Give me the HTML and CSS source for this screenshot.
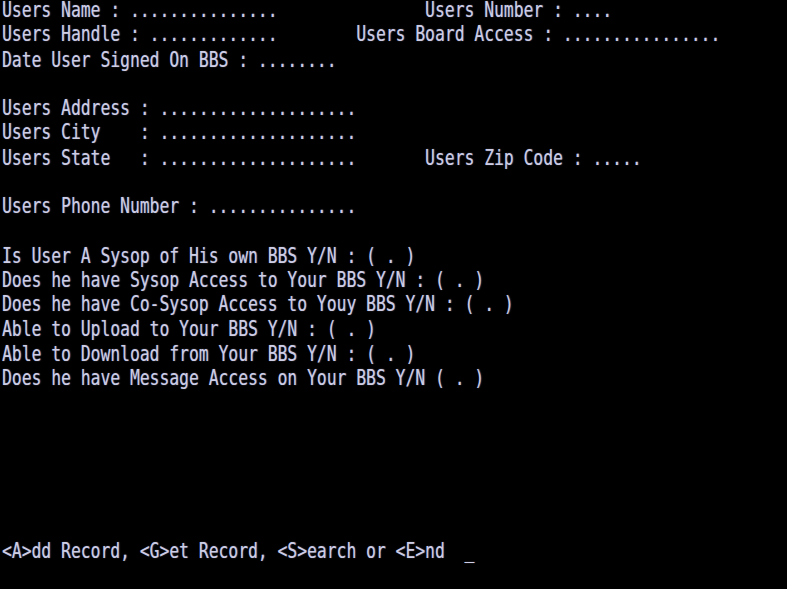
FILE: index.html
```html
<!DOCTYPE html>
<html lang="en">
<head>
<meta charset="utf-8">
<title>User Record</title>
<link rel="stylesheet" href="styles.css">
</head>
<body>
<main class="screen">
<pre class="block">Users Name : ...............               Users Number : ....
Users Handle : .............        Users Board Access : ................
Date User Signed On BBS : ........

Users Address : ....................
Users City    : ....................
Users State   : ....................       Users Zip Code : .....

Users Phone Number : ...............

Is User A Sysop of His own BBS Y/N : ( . )
Does he have Sysop Access to Your BBS Y/N : ( . )
Does he have Co-Sysop Access to Youy BBS Y/N : ( . )
Able to Upload to Your BBS Y/N : ( . )
Able to Download from Your BBS Y/N : ( . )
Does he have Message Access on Your BBS Y/N ( . )






&lt;A&gt;dd Record, &lt;G&gt;et Record, &lt;S&gt;earch or &lt;E&gt;nd  _</pre>
</main>
</body>
</html>
```
FILE: styles.css
```css
html, body {
  margin: 0;
  padding: 0;
  background: #000;
  width: 787px;
  height: 589px;
  overflow: hidden;
}

.screen {
  margin-top: -2px;
  padding-left: 2px;
  transform: scaleY(1.345);
  transform-origin: 0 0;
}

.block {
  margin: 0;
  font-family: "DejaVu Sans Mono", monospace;
  font-size: 16.35px;
  line-height: 18.245px;
  color: #cdcde6;
  white-space: pre;
  text-shadow: 0.4px 0 1px rgba(200, 200, 240, 0.55);
}
```
